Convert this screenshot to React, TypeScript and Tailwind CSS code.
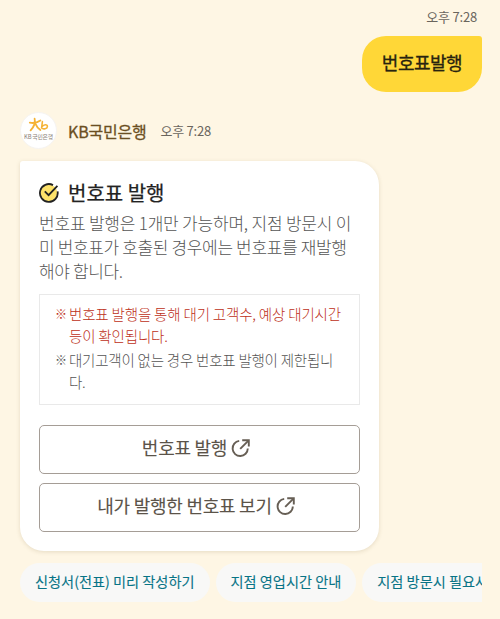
import type { ReactNode } from "react";
import { clsx } from "clsx";

const NOTICES = [
    {
        text: ["번호표 발행을 통해 대기 고객수, 예상 대기시간", "등이 확인됩니다."],
        highlight: true,
    },
    {
        text: ["대기고객이 없는 경우 번호표 발행이 제한됩니", "다."],
        highlight: false,
    },
];

const QUICK_REPLIES = ["신청서(전표) 미리 작성하기", "지점 영업시간 안내", "지점 방문시 필요사항"];

function BankAvatar() {
    return (
        <div className="flex h-[37px] w-[37px] shrink-0 flex-col items-center rounded-full border border-[#f6f4f1] bg-white pt-[4px]">
            <svg width="22" height="16" viewBox="0 0 22 16" fill="none" stroke="#f5b335" strokeWidth="1.8" strokeLinecap="round">
                <path d="M1.8 5.6C5.5 6.6 9.5 5.4 12.4 3.4" />
                <path d="M6.6 1.6C7.6 5.6 6 9.8 2.6 13.4" />
                <path d="M7.2 6.4C8.4 9.2 10 11.4 12.4 13" />
                <path d="M14.4 4.6L13.6 11C15.2 12.6 19.4 11.8 19.4 9.4C19.4 7.2 15.8 7.2 13.9 9.8" strokeWidth="1.6" />
            </svg>
            <span className="whitespace-nowrap text-[5.8px] leading-[7px] tracking-[-0.2px] text-[#8a8078]">
                KB 국민은행
            </span>
        </div>
    );
}

function CheckIcon() {
    return (
        <svg className="shrink-0" width="21" height="21" viewBox="0 0 21 21" fill="none">
            <circle cx="9.8" cy="11" r="8.4" fill="#fde26a" />
            <path d="M14 3.1A8.9 8.9 0 1 0 18.6 9.4" stroke="#222" strokeWidth="1.8" />
            <path d="M5.8 9.4L9.6 13.2L18.4 3.8" stroke="#222" strokeWidth="1.8" />
        </svg>
    );
}

function LinkIcon() {
    return (
        <svg className="shrink-0" width="20" height="20" viewBox="0 0 20 20" fill="none" stroke="#665e54" strokeWidth="1.9">
            <path d="M8.2 2.9A7.6 7.6 0 1 0 16.8 10.6" />
            <path d="M9.2 10.8L17.2 2.8" />
            <path d="M11.2 2.2H17.8V8.6" />
        </svg>
    );
}

function CardButton({ children, className }: { children: ReactNode; className?: string }) {
    return (
        <button
            className={clsx(
                "flex h-[49px] w-full items-center justify-center rounded-[5px] border border-[#a59d96] pr-[6px] text-[18px] leading-none tracking-[-0.25px] text-[#5b5349] [-webkit-text-stroke:0.1px]",
                className
            )}
        >
            <span className="-translate-y-[3px]">{children}</span>
            <span className="ml-[4px] -translate-y-[2px]">
                <LinkIcon />
            </span>
        </button>
    );
}

export default function App() {
    return (
        <main className="h-[619px] w-[500px] overflow-hidden bg-[#fef6e4] px-5 font-['Noto_Sans_CJK_KR',sans-serif]">
            {/* Sent message */}
            <div className="flex flex-col items-end">
                <time className="mt-[8px] mr-[3px] text-[13px] leading-[18px] tracking-[-0.2px] text-[#6a655d]">오후 7:28</time>
                <div className="mt-[10px] -mr-[2px] flex h-[56px] w-[120px] items-center justify-center rounded-[24px] rounded-tr-[3px] bg-[#ffd737] pb-[4px] text-[18px] tracking-[-0.5px] text-[#28230f] [-webkit-text-stroke:0.3px]">
                    번호표발행
                </div>
            </div>

            {/* Sender */}
            <div className="mt-[19px] flex h-[39px] items-center">
                <BankAvatar />
                <span className="ml-[11px] text-[16px] leading-6 tracking-[-0.2px] text-[#6b4f22] [-webkit-text-stroke:0.3px]">KB국민은행</span>
                <time className="ml-[14px] text-[13px] leading-[18px] tracking-[-0.25px] text-[#6a655d]">오후 7:28</time>
            </div>

            {/* Answer card */}
            <section className="mt-[11px] h-[390px] w-[359px] rounded-[24px] rounded-tl-[3px] bg-white px-[19px] pt-[18px] shadow-[0_1px_4px_rgba(120,100,50,0.18)]">
                <div className="flex h-[27px] items-center">
                    <CheckIcon />
                    <h1 className="ml-2 text-[20px] leading-[27px] text-[#222] [-webkit-text-stroke:0.25px]">번호표 발행</h1>
                </div>
                <p className="mt-[5px] whitespace-nowrap text-[17px] font-light leading-6 tracking-[-0.2px] text-[#555]">
                    번호표 발행은 1개만 가능하며, 지점 방문시 이
                    <br />
                    <span className="tracking-[-0.35px]">미 번호표가 호출된 경우에는 번호표를 재발행</span>
                    <br />
                    <span className="tracking-[-0.35px]">해야 합니다.</span>
                </p>

                <ul className="mt-[11px] h-[111px] w-[321px] border border-[#e9e9e9] pt-[8px] pl-[15px]">
                    {NOTICES.map(({ text, highlight }) => (
                        <li
                            key={text[0]}
                            className={clsx(
                                "mb-[2px] flex whitespace-nowrap text-[14.5px] font-light leading-[22px]",
                                highlight ? "tracking-[-0.17px] text-[#bd3020]" : "tracking-[-0.22px] text-[#555]"
                            )}
                        >
                            <span className="w-[14px] text-[12px]">※</span>
                            <span>
                                {text[0]}
                                <br />
                                {text[1]}
                            </span>
                        </li>
                    ))}
                </ul>

                <CardButton className="mt-[20px]">번호표 발행</CardButton>
                <CardButton className="mt-[9px]">내가 발행한 번호표 보기</CardButton>
            </section>

            {/* Quick replies */}
            <div className="mt-[12px] flex w-[462px] gap-[6px] overflow-hidden whitespace-nowrap">
                {QUICK_REPLIES.map((reply) => (
                    <button
                        key={reply}
                        className="h-[39px] shrink-0 rounded-full bg-[#f8f8f7] px-[15px] pb-[2px] text-[14.2px] text-[#087486] [-webkit-text-stroke:0.1px]"
                    >
                        {reply}
                    </button>
                ))}
            </div>
        </main>
    );
}
